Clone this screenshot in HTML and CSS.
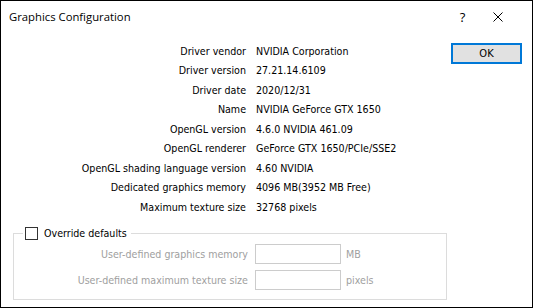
FILE: index.html
```html
<!DOCTYPE html>
<html lang="en">
<head>
    <meta charset="UTF-8">
    <title>Graphics Configuration</title>
    <link rel="stylesheet" href="styles.css">
</head>
<body>
    <div class="window">
        <div class="titlebar">
            <span class="title">Graphics Configuration</span>
            <span class="tb-btn help">?</span>
            <span class="tb-btn close">
                <svg width="10" height="10" viewBox="0 0 10 10">
                    <path d="M0.5 0.5 L9.5 9.5 M9.5 0.5 L0.5 9.5" stroke="#000" stroke-width="1" fill="none"/>
                </svg>
            </span>
        </div>
        <div class="content">
            <div class="info">
                <span class="label">Driver vendor</span><span class="value">NVIDIA Corporation</span>
                <span class="label">Driver version</span><span class="value">27.21.14.6109</span>
                <span class="label">Driver date</span><span class="value">2020/12/31</span>
                <span class="label">Name</span><span class="value">NVIDIA GeForce GTX 1650</span>
                <span class="label">OpenGL version</span><span class="value">4.6.0 NVIDIA 461.09</span>
                <span class="label">OpenGL renderer</span><span class="value">GeForce GTX 1650/PCIe/SSE2</span>
                <span class="label">OpenGL shading language version</span><span class="value">4.60 NVIDIA</span>
                <span class="label">Dedicated graphics memory</span><span class="value">4096 MB(3952 MB Free)</span>
                <span class="label">Maximum texture size</span><span class="value">32768 pixels</span>
            </div>
            <button class="ok-btn">OK</button>
        </div>
        <fieldset class="group">
            <legend class="group-title">
                <label class="check"><input type="checkbox"><span>Override defaults</span></label>
            </legend>
            <div class="group-grid">
                <span class="label">User-defined graphics memory</span>
                <input type="text" class="field" disabled>
                <span class="unit">MB</span>
                <span class="label">User-defined maximum texture size</span>
                <input type="text" class="field" disabled>
                <span class="unit">pixels</span>
            </div>
        </fieldset>
    </div>
</body>
</html>
```
FILE: styles.css
```css
body {
    margin: 0;
    background: #fff;
    font-family: "DejaVu Sans Condensed", Lato, Arial, sans-serif;
    font-size: 10.6px;
    color: #000;
}

.window {
    width: 533px;
    height: 308px;
    box-sizing: border-box;
    border: 1px solid #000;
    background: #fff;
}

.titlebar {
    height: 31px;
    display: flex;
    align-items: center;
    padding-left: 8px;
    padding-right: 17px;
}

.title {
    flex: 1;
    font-family: "Open Sans", sans-serif;
    font-size: 11.3px;
}

.tb-btn {
    width: 35px;
    display: flex;
    justify-content: center;
    align-items: center;
}

.help {
    font-family: "Open Sans", sans-serif;
    font-size: 13px;
}

.content {
    display: flex;
    align-items: flex-start;
    padding-top: 9.5px;
}

.info {
    display: grid;
    grid-template-columns: 245px auto;
    column-gap: 10px;
    flex: 1;
}

.info span {
    height: 19.5px;
    line-height: 19.5px;
    white-space: nowrap;
}

.label {
    text-align: right;
}

.ok-btn {
    margin-top: 1.5px;
    margin-right: 10px;
    width: 71px;
    height: 21px;
    box-sizing: border-box;
    border: 2px solid #0078d7;
    background: #e1e1e1;
    font-family: inherit;
    font-size: 11px;
    color: #000;
    padding: 0;
}

.group {
    margin: 8px 0 0 12px;
    width: 434px;
    height: 75px;
    box-sizing: border-box;
    border: 1px solid #dcdcdc;
    padding: 0;
}

.group-title {
    margin-left: 9px;
    padding: 0 4px 0 2px;
}

.check {
    display: flex;
    align-items: center;
    gap: 6px;
    height: 16px;
}

.check input {
    appearance: none;
    margin: 0;
    width: 13px;
    height: 13px;
    box-sizing: border-box;
    border: 1px solid #333;
    background: #fff;
}

.group-grid {
    display: grid;
    grid-template-columns: 234px 86px auto;
    column-gap: 7px;
    row-gap: 6px;
    align-items: center;
    margin-top: 3px;
    color: #a0a0a0;
}

.group-grid .unit {
    margin-left: -2px;
}

.field {
    width: 86px;
    height: 20px;
    box-sizing: border-box;
    border: 1px solid #cccccc;
    background: #fff;
    margin: 0;
    padding: 0;
}
```
